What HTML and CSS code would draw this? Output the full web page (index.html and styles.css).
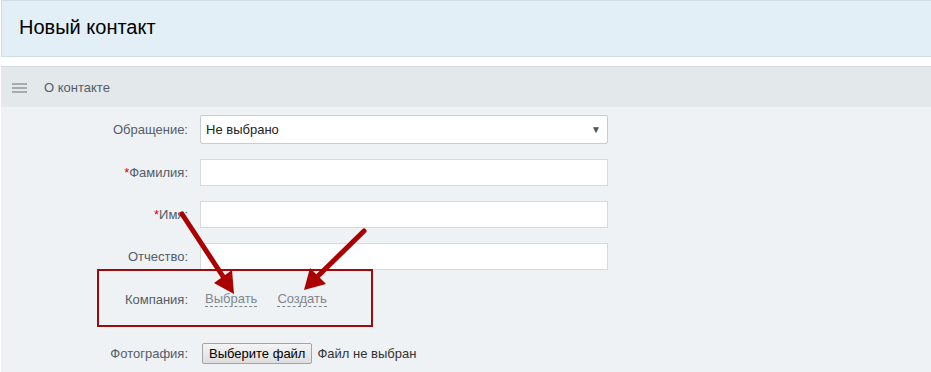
FILE: index.html
```html
<!DOCTYPE html>
<html lang="ru">
<head>
<meta charset="utf-8">
<title>Новый контакт</title>
<link rel="stylesheet" href="styles.css">
</head>
<body>
<div class="page">
  <header class="top">
    <h1 class="title">Новый контакт</h1>
  </header>
  <section class="section">
    <div class="section-head">
      <span class="burger"><i></i><i></i><i></i></span>
      <span class="section-title">О контакте</span>
    </div>
    <div class="form">
      <div class="row row-select">
        <label class="lbl">Обращение:</label>
        <div class="select"><span>Не выбрано</span><span class="caret">▼</span></div>
      </div>
      <div class="row row-input">
        <label class="lbl"><span class="req">*</span>Фамилия:</label>
        <div class="input"></div>
      </div>
      <div class="row row-input">
        <label class="lbl"><span class="req">*</span>Имя:</label>
        <div class="input"></div>
      </div>
      <div class="row row-input">
        <label class="lbl">Отчество:</label>
        <div class="input"></div>
      </div>
      <div class="row row-company">
        <label class="lbl">Компания:</label>
        <div class="links"><a class="dash">Выбрать</a><a class="dash">Создать</a></div>
      </div>
      <div class="row row-photo">
        <label class="lbl">Фотография:</label>
        <div class="file"><span class="file-btn">Выберите файл</span><span class="file-name">Файл не выбран</span></div>
      </div>
    </div>
    <div class="annot-box"></div>
    <svg class="arrows" width="931" height="372" viewBox="0 0 931 372">
      <line x1="182" y1="214" x2="224" y2="278" stroke="#ab0000" stroke-width="5" stroke-linecap="round"/>
      <polygon points="234,294 214,283 232,270" fill="#ab0000"/>
      <line x1="364" y1="231" x2="318" y2="276" stroke="#ab0000" stroke-width="5" stroke-linecap="round"/>
      <polygon points="304,290 310,268 326,284" fill="#ab0000"/>
    </svg>
  </section>
</div>
</body>
</html>
```
FILE: styles.css
```css
html, body {
  margin: 0;
  padding: 0;
  background: #ffffff;
  font-family: "Liberation Sans", Arial, sans-serif;
}
.page {
  width: 931px;
  height: 372px;
  overflow: hidden;
  position: relative;
}
.top {
  margin-left: 1px;
  height: 55px;
  background: #e2eff6;
  border: 1px solid #d2dde3;
  border-right: none;
  display: flex;
  align-items: center;
  padding-left: 17px;
}
.title {
  margin: 0;
  font-size: 20px;
  font-weight: normal;
  color: #000;
  padding-bottom: 2px;
}
.section {
  margin-top: 9px;
  margin-left: 1px;
}
.section-head {
  height: 40px;
  background: #e3e8eb;
  border-top: 1px solid #d4dbdf;
  display: flex;
  align-items: center;
  padding-left: 11px;
}
.burger {
  display: flex;
  flex-direction: column;
  gap: 2px;
  width: 15px;
  margin-right: 17px;
  margin-top: 2px;
}
.burger i {
  display: block;
  height: 2px;
  background: #a7abae;
}
.section-title {
  font-size: 13px;
  color: #535c69;
  margin-top: 1px;
}
.form {
  background: #eef2f4;
  padding-top: 8px;
  height: 300px;
}
.row {
  display: grid;
  grid-template-columns: 187px 408px;
  column-gap: 12px;
  align-items: center;
}
.lbl {
  text-align: right;
  font-size: 13px;
  color: #535c69;
}
.req {
  color: #d0021b;
}
.row-select {
  height: 29px;
  margin-bottom: 15px;
}
.select {
  height: 27px;
  background: #fff;
  border: 1px solid #c6cdd3;
  border-radius: 2px;
  display: flex;
  align-items: center;
  justify-content: space-between;
  padding: 0 6px 0 5px;
  font-size: 13px;
  color: #222;
}
.caret {
  font-size: 10px;
  color: #555;
}
.row-input {
  height: 27px;
  margin-bottom: 15px;
}
.input {
  height: 25px;
  background: #fff;
  border: 1px solid #d5dadd;
}
.row-company {
  height: 28px;
  margin-top: 14px;
}
.links {
  display: flex;
  gap: 20px;
  padding-left: 5px;
}
.dash {
  font-size: 13px;
  color: #80868e;
  border-bottom: 1px dashed #80868e;
  line-height: 15px;
  cursor: pointer;
}
.row-photo {
  height: 22px;
  margin-top: 29px;
}
.file {
  display: flex;
  align-items: center;
  gap: 5px;
  padding-left: 2px;
}
.file-btn {
  font-size: 13px;
  color: #000;
  border: 1px solid #a4a4a4;
  border-radius: 2px;
  background: linear-gradient(#f4f4f4, #dedede);
  padding: 2px 6px 2px 6px;
  line-height: 15px;
}
.file-name {
  font-size: 13px;
  color: #333;
}
.annot-box {
  position: absolute;
  left: 97px;
  top: 269px;
  width: 272px;
  height: 54px;
  border: 2px solid #9e0a0e;
}
.arrows {
  position: absolute;
  left: 0;
  top: 0;
  pointer-events: none;
}
```
